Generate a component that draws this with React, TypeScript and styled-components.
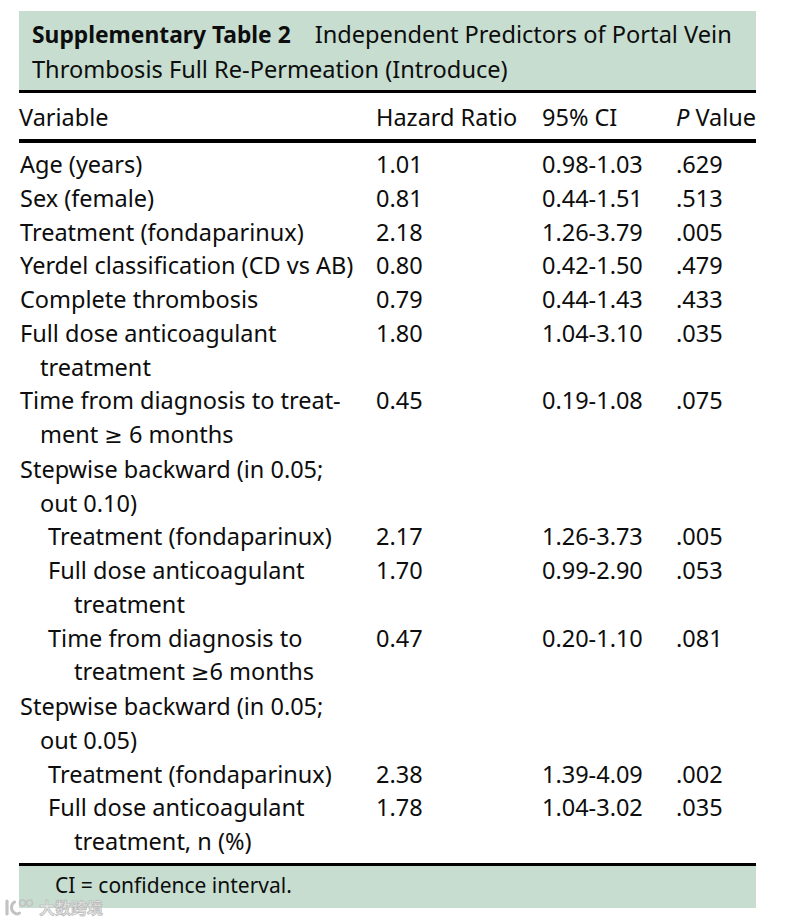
import styled, { createGlobalStyle } from "styled-components";

const GlobalStyle = createGlobalStyle`
  html, body {
    margin: 0;
    padding: 0;
    background: #ffffff;
  }
  body {
    font-family: "Noto Sans", "Open Sans", sans-serif;
    color: #0d0d0d;
  }
`;

type Row = {
  lines: string[];
  level: number;
  hr?: string;
  ci?: string;
  p?: string;
};

const rows: Row[] = [
  { lines: ["Age (years)"], level: 0, hr: "1.01", ci: "0.98-1.03", p: ".629" },
  { lines: ["Sex (female)"], level: 0, hr: "0.81", ci: "0.44-1.51", p: ".513" },
  { lines: ["Treatment (fondaparinux)"], level: 0, hr: "2.18", ci: "1.26-3.79", p: ".005" },
  { lines: ["Yerdel classification (CD vs AB)"], level: 0, hr: "0.80", ci: "0.42-1.50", p: ".479" },
  { lines: ["Complete thrombosis"], level: 0, hr: "0.79", ci: "0.44-1.43", p: ".433" },
  { lines: ["Full dose anticoagulant", "treatment"], level: 0, hr: "1.80", ci: "1.04-3.10", p: ".035" },
  { lines: ["Time from diagnosis to treat-", "ment \u2265 6 months"], level: 0, hr: "0.45", ci: "0.19-1.08", p: ".075" },
  { lines: ["Stepwise backward (in 0.05;", "out 0.10)"], level: 0 },
  { lines: ["Treatment (fondaparinux)"], level: 1, hr: "2.17", ci: "1.26-3.73", p: ".005" },
  { lines: ["Full dose anticoagulant", "treatment"], level: 1, hr: "1.70", ci: "0.99-2.90", p: ".053" },
  { lines: ["Time from diagnosis to", "treatment \u22656 months"], level: 1, hr: "0.47", ci: "0.20-1.10", p: ".081" },
  { lines: ["Stepwise backward (in 0.05;", "out 0.05)"], level: 0 },
  { lines: ["Treatment (fondaparinux)"], level: 1, hr: "2.38", ci: "1.39-4.09", p: ".002" },
  { lines: ["Full dose anticoagulant", "treatment, n (%)"], level: 1, hr: "1.78", ci: "1.04-3.02", p: ".035" },
];

// the ≥ sign gets a flat bar, as in the print
const renderLine = (line: string) =>
  line.split("\u2265").map((part, k) =>
    k === 0 ? (
      part
    ) : (
      <span key={k}>
        <StGeq>{"\u2265"}</StGeq>
        {part}
      </span>
    )
  );

const App = () => {
  return (
    <>
      <GlobalStyle />
      <StPage>
        <StTable>
          <StCaption>
            <StCaptionLabel>Supplementary Table 2</StCaptionLabel>
            Independent Predictors of Portal Vein
            <br />
            Thrombosis Full Re-Permeation (Introduce)
          </StCaption>
          <StRule $h={3} />
          <StHeadRow>
            <StCell>Variable</StCell>
            <StCell>Hazard Ratio</StCell>
            <StCell>95% CI</StCell>
            <StCell>
              <em>P</em> Value
            </StCell>
          </StHeadRow>
          <StRule $h={4} />
          <StBody>
            {rows.map((row, i) => (
              <StBodyRow key={i}>
                <StVarCell>
                  {row.lines.map((line, j) => (
                    <StVarLine key={j} $level={row.level} $cont={j > 0}>
                      {renderLine(line)}
                    </StVarLine>
                  ))}
                </StVarCell>
                <StCell>{row.hr}</StCell>
                <StCell>{row.ci}</StCell>
                <StCell>{row.p}</StCell>
              </StBodyRow>
            ))}
          </StBody>
          <StRule $h={3} />
          <StFooter>
            <StFooterText>CI = confidence interval.</StFooterText>
          </StFooter>
          <StWatermark>
            <svg width="30" height="18" viewBox="0 0 30 18" fill="none">
              <path d="M3 3 L3 16" stroke="#c2c2c2" strokeWidth="3.2" strokeLinecap="round" />
              <path
                d="M10.5 4 C6.5 6.5 6.5 12.5 10.5 15 C12.5 16.2 14.5 16 15.5 15"
                stroke="#c2c2c2"
                strokeWidth="3"
                strokeLinecap="round"
              />
              <circle cx="18.5" cy="5" r="3" stroke="#c2c2c2" strokeWidth="1.6" />
              <circle cx="25.5" cy="5" r="3" stroke="#c2c2c2" strokeWidth="1.6" />
            </svg>
            <StWatermarkText>大数跨境</StWatermarkText>
          </StWatermark>
        </StTable>
      </StPage>
    </>
  );
};
export default App;

const StPage = styled.div`
  padding: 11px 0 15px 19px;
  min-height: 894px;
`;
const StTable = styled.div`
  position: relative;
  width: 737px;
  font-size: 23.5px;
`;
const StCaption = styled.div`
  background: #c6ddd0;
  padding: 6px 13px 4px;
  line-height: 34px;
  font-size: 23.6px;
`;
const StCaptionLabel = styled.strong`
  font-weight: 700;
  font-size: 22.8px;
  margin-right: 24px;
`;
const StRule = styled.div<{ $h: number }>`
  height: ${(props) => props.$h}px;
  background: #000;
`;
const StGrid = styled.div`
  display: grid;
  grid-template-columns: 357px 166px 134px 1fr;
`;
const StHeadRow = styled(StGrid)`
  padding: 7px 0 5px;
  line-height: 34px;
  em {
    font-style: italic;
  }
`;
const StBody = styled.div`
  padding: 5px 0 4px;
  line-height: 33.75px;
`;
const StBodyRow = styled(StGrid)``;
const StCell = styled.div`
  white-space: nowrap;
`;
const StVarCell = styled.div`
  display: flex;
  flex-direction: column;
`;
const StVarLine = styled.span<{ $level: number; $cont: boolean }>`
  white-space: nowrap;
  padding-left: ${(props) =>
    props.$level === 0 ? (props.$cont ? 21 : 1) : props.$cont ? 55 : 29}px;
`;
const StGeq = styled.span`
  font-family: "DejaVu Sans", sans-serif;
  font-size: 22px;
`;
const StFooter = styled.div`
  background: #c6ddd0;
  height: 42px;
  box-sizing: border-box;
  padding: 8px 0 0 36px;
`;
const StFooterText = styled.div`
  font-size: 21px;
  line-height: 22px;
`;
const StWatermark = styled.div`
  position: absolute;
  left: -15px;
  top: 100%;
  margin-top: -10px;
  display: flex;
  align-items: center;
  gap: 5px;
  z-index: 2;
`;
const StWatermarkText = styled.span`
  font-family: "Noto Sans CJK SC", sans-serif;
  font-size: 16px;
  line-height: 18px;
  font-weight: 700;
  color: #e6e6e6;
  -webkit-text-stroke: 0.7px #b8b8b8;
`;
